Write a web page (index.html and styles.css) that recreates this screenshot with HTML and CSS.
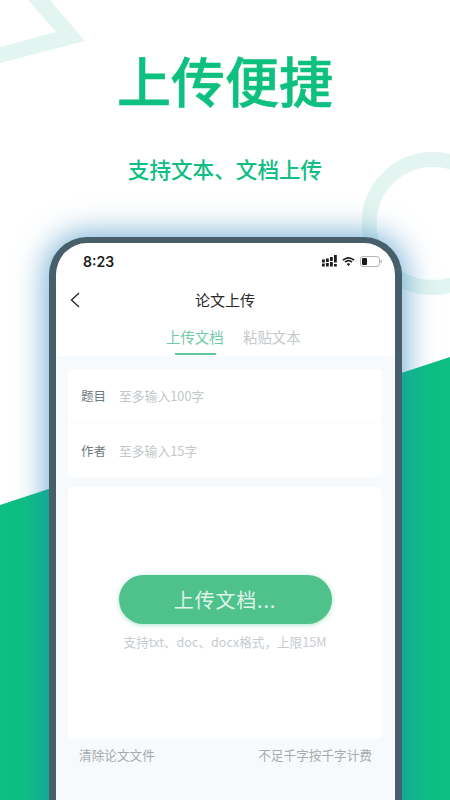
FILE: index.html
```html
<!DOCTYPE html>
<html lang="zh-CN">
<head>
<meta charset="utf-8">
<title>上传便捷</title>
<link rel="stylesheet" href="styles.css">
</head>
<body>
<svg class="backdrop" viewBox="0 0 450 800" width="450" height="800" aria-hidden="true">
  <polygon class="deco" points="28,0 56,32 0,47 0,63 85,41 50,0"/>
  <circle class="ring" cx="433" cy="223.5" r="64"/>
  <polygon class="slope" points="0,505 450,357 450,800 0,800"/>
</svg>
<main class="screen">
  <h1 class="title">上传便捷</h1>
  <p class="subtitle">支持文本、文档上传</p>
  <section class="phone">
    <div class="status">
      <span class="time">8:23</span>
      <div class="status-icons">
        <svg width="15" height="12" viewBox="0 0 15 12"><g fill="#1c1c1c"><rect x="0" y="4.5" width="2.8" height="3"/><rect x="0" y="8.5" width="2.8" height="3"/><rect x="4" y="3.5" width="2.8" height="3.5"/><rect x="4" y="8" width="2.8" height="3.5"/><rect x="8" y="2" width="2.8" height="4"/><rect x="8" y="7" width="2.8" height="4.5"/><rect x="12" y="0" width="2.8" height="7.5"/><rect x="12" y="9" width="2.8" height="2.5"/></g></svg>
        <svg width="13" height="11" viewBox="0 0 14 11"><path d="M1 4 Q7 -1 13 4 M3.2 6.2 Q7 3 10.8 6.2" fill="none" stroke="#1c1c1c" stroke-width="1.8"/><path d="M5 8 Q7 6.6 9 8 L7 10.6 Z" fill="#1c1c1c"/></svg>
        <svg width="22" height="11" viewBox="0 0 22 11"><rect x=".5" y=".5" width="19" height="10" rx="2.5" fill="#fff" stroke="#b5b5b5"/><rect x="2" y="2" width="5" height="7" rx="1" fill="#1c1c1c"/><rect x="20.5" y="4" width="1.3" height="3" fill="#b5b5b5"/></svg>
      </div>
    </div>
    <header class="nav">
      <svg class="back" width="10" height="16" viewBox="0 0 10 16"><path d="M9 1 L1.5 8 L9 15" fill="none" stroke="#2a2a2a" stroke-width="1.4"/></svg>
      <span class="nav-title">论文上传</span>
    </header>
    <nav class="tabs">
      <a class="tab tab-on">上传文档</a>
      <a class="tab">粘贴文本</a>
    </nav>
    <div class="content">
      <div class="card form">
        <div class="row"><span class="label">题目</span><span class="hint">至多输入100字</span></div>
        <div class="row row-last"><span class="label">作者</span><span class="hint">至多输入15字</span></div>
      </div>
      <div class="card upload">
        <button class="upload-btn">上传文档...</button>
        <p class="formats">支持txt、doc、docx格式，上限15M</p>
      </div>
      <div class="foot">
        <span>清除论文文件</span>
        <span>不足千字按千字计费</span>
      </div>
    </div>
  </section>
</main>
</body>
</html>
```
FILE: styles.css
```css
html, body {
  margin: 0;
  padding: 0;
  width: 450px;
  height: 800px;
  overflow: hidden;
  background: #fff;
  font-family: "Noto Sans CJK SC", "Noto Sans", sans-serif;
}
.backdrop {
  position: absolute;
  left: 0;
  top: 0;
}
.deco { fill: #e3f5f0; }
.ring { fill: none; stroke: #e3f5f0; stroke-width: 15; }
.slope { fill: #0dbf82; }
.screen {
  position: relative;
  display: flex;
  flex-direction: column;
  height: 800px;
  overflow: hidden;
}
.title {
  margin: 41px 0 0;
  height: 78px;
  line-height: 78px;
  font-size: 54px;
  font-weight: 500;
  -webkit-text-stroke: .6px #0dc07f;
  color: #0dc07f;
  text-align: center;
}
.subtitle {
  margin: 30px 0 0;
  height: 40px;
  line-height: 40px;
  font-size: 21.6px;
  font-weight: 500;
  color: #10bd82;
  text-align: center;
}
.phone {
  box-sizing: border-box;
  width: 353px;
  height: 600px;
  flex: none;
  margin: 48px 0 0 49px;
  border: 7px solid #465f6a;
  border-top-width: 6px;
  border-radius: 38px 38px 0 0;
  background: #fff;
  box-shadow: 0 0 30px 4px rgba(40, 130, 190, .62);
}
.status {
  display: flex;
  justify-content: space-between;
  align-items: center;
  height: 36px;
  padding: 0 13px 0 27px;
}
.time {
  font-family: "Inter", sans-serif;
  font-size: 14px;
  font-weight: 600;
  color: #1c1c1c;
}
.status-icons {
  display: flex;
  align-items: center;
  gap: 5px;
}
.nav {
  position: relative;
  display: flex;
  justify-content: center;
  align-items: center;
  height: 42px;
}
.back {
  position: absolute;
  left: 14px;
  top: 13px;
}
.nav-title {
  font-size: 15px;
  margin-top: -2px;
  margin-left: -1px;
  color: #2a2a2a;
}
.tabs {
  display: flex;
  justify-content: center;
  gap: 19px;
  height: 35px;
  padding-left: 16px;
}
.tab {
  position: relative;
  width: 58px;
  font-size: 14.4px;
  line-height: 32px;
  color: #c4c9cc;
  white-space: nowrap;
}
.tab-on { color: #6fcba5; }
.tab-on::after {
  content: "";
  position: absolute;
  left: 9px;
  right: 8px;
  bottom: 1px;
  height: 2px;
  background: #5fc69c;
}
.content {
  box-sizing: border-box;
  height: 445px;
  padding: 13px 13px 0 12px;
  background: #f7fafc;
}
.card {
  background: #fff;
  border-radius: 5px;
}
.form { height: 108px; }
.row {
  display: flex;
  align-items: center;
  gap: 13px;
  box-sizing: border-box;
  height: 54px;
  padding-left: 13px;
  border-bottom: 1px solid #f8fafb;
}
.row-last { height: 54px; border-bottom: 0; }
.label {
  font-size: 12.5px;
  color: #6d7a80;
}
.hint {
  font-size: 12.8px;
  color: #c3c8cb;
}
.upload {
  display: flex;
  flex-direction: column;
  align-items: center;
  box-sizing: border-box;
  height: 252px;
  margin-top: 10px;
  padding-top: 88px;
}
.upload-btn {
  width: 213px;
  height: 49px;
  border: 0;
  border-radius: 25px;
  padding: 0;
  background: #4fc28c;
  box-shadow: 0 1px 5px rgba(79, 194, 140, .45);
  font-family: inherit;
  font-size: 20px;
  letter-spacing: .8px;
  color: #dff3ea;
}
.formats {
  margin: 9px 0 0;
  font-size: 12.6px;
  line-height: 18px;
  color: #c6cbcf;
  white-space: nowrap;
}
.foot {
  display: flex;
  justify-content: space-between;
  padding: 7px 10px 0 11px;
  font-size: 12.65px;
  line-height: 18px;
  color: #a5abae;
}
```
